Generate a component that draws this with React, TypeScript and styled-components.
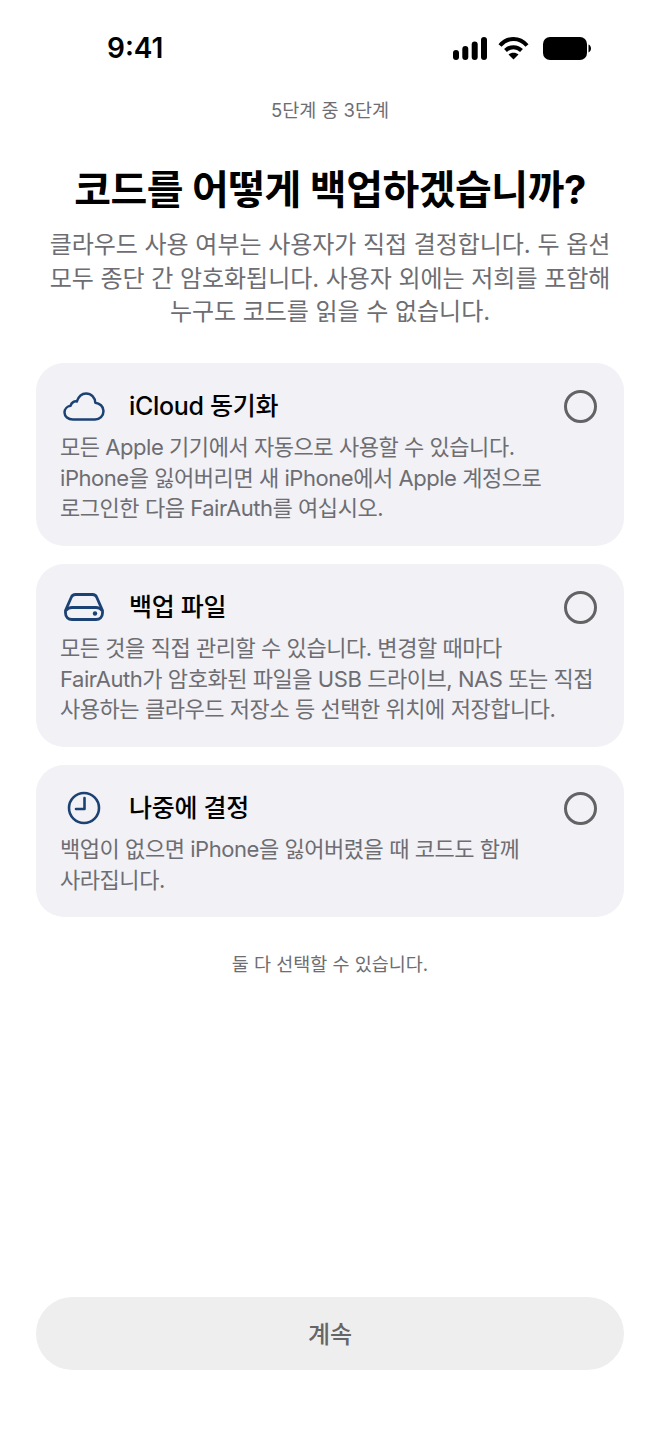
import React from "react";
import styled, { createGlobalStyle } from "styled-components";

const GlobalStyle = createGlobalStyle`
  html, body {
    margin: 0;
    padding: 0;
    background: #ffffff;
  }
  * {
    box-sizing: border-box;
  }
`;

const options = [
  {
    key: "icloud",
    title: "iCloud 동기화",
    lines: [
      "모든 Apple 기기에서 자동으로 사용할 수 있습니다.",
      "iPhone을 잃어버리면 새 iPhone에서 Apple 계정으로",
      "로그인한 다음 FairAuth를 여십시오.",
    ],
  },
  {
    key: "file",
    title: "백업 파일",
    lines: [
      "모든 것을 직접 관리할 수 있습니다. 변경할 때마다",
      "FairAuth가 암호화된 파일을 USB 드라이브, NAS 또는 직접",
      "사용하는 클라우드 저장소 등 선택한 위치에 저장합니다.",
    ],
  },
  {
    key: "later",
    title: "나중에 결정",
    lines: ["백업이 없으면 iPhone을 잃어버렸을 때 코드도 함께", "사라집니다."],
  },
];

const OptionIcon = ({ name }: { name: string }) => {
  if (name === "icloud") {
    return (
      <svg width="42" height="29" viewBox="0 0 42 29" fill="none" stroke="#1c4273" strokeWidth="2.5">
        <path
          d="M10 27.500C5 27.500 1.500 24.300 1.500 20.500c0-3.500 2.700-6.200 6-6.700C8.500 10.500 11.500 8.800 13.800 9.500 15.500 4.700 18.800 1.500 23 1.500c5.400 0 9 4 9.300 9.300 4.200.4 8.200 3.500 8.200 8.200 0 5-3.800 8.500-8.500 8.500z"
          strokeLinejoin="round"
        />
      </svg>
    );
  }
  if (name === "file") {
    return (
      <svg width="40" height="28" viewBox="0 0 40 28" fill="none" stroke="#1c4273" strokeWidth="2.800">
        <path
          d="M11.500 1.500h17c2 0 3.500 1 4.200 2.800L38.500 17.500v2.500c0 3.900-2.600 6.500-6.500 6.500H8c-3.900 0-6.500-2.600-6.500-6.500v-2.500L7.300 4.300C8 2.500 9.500 1.500 11.500 1.500z"
          strokeLinejoin="round"
        />
        <path d="M2 17.500C3.600 15.500 5.500 14.500 8 14.500h24c2.500 0 4.400 1 6 3" />
        <circle cx="31" cy="20.500" r="2.200" fill="#1c4273" stroke="none" />
      </svg>
    );
  }
  return (
    <svg width="34" height="34" viewBox="0 0 34 34" fill="none" stroke="#1c4273" strokeWidth="2.600">
      <circle cx="17" cy="17" r="15" />
      <path d="M17.500 7v11H9" strokeLinecap="round" strokeLinejoin="round" />
    </svg>
  );
};

const App = () => (
  <Screen>
    <GlobalStyle />
    <StatusBar>
      <Clock>9:41</Clock>
      <StatusIcons>
        <svg width="34" height="23" viewBox="0 0 34 23" fill="#000">
          <rect x="0" y="13" width="6" height="10" rx="3" />
          <rect x="9.300" y="9" width="6" height="14" rx="3" />
          <rect x="18.700" y="4.500" width="6" height="18.500" rx="3" />
          <rect x="28" y="0" width="6" height="23" rx="3" />
        </svg>
        <WifiGlyph width="31" height="24" viewBox="0 0 31 24" fill="none" stroke="#000" strokeWidth="4">
          <path d="M2 9.500C9.500 .8 21.500 .8 29 9.500" />
          <path d="M7.500 14.500c4.500-4.500 11.500-4.500 16 0" />
          <path d="M15.500 23.500l-5-5c2.800-2.400 7.200-2.400 10 0z" fill="#000" stroke="none" />
        </WifiGlyph>
        <svg width="48" height="23" viewBox="0 0 48 23" fill="#000">
          <rect x="0" y="0" width="44" height="23" rx="7" />
          <path d="M45.500 7.500c1.500.6 2.500 2.200 2.500 4s-1 3.400-2.500 4z" />
        </svg>
      </StatusIcons>
    </StatusBar>
    <Step>5단계 중 3단계</Step>
    <Title>코드를 어떻게 백업하겠습니까?</Title>
    <Lead>
      클라우드 사용 여부는 사용자가 직접 결정합니다. 두 옵션
      <br />
      모두 종단 간 암호화됩니다. 사용자 외에는 저희를 포함해
      <br />
      누구도 코드를 읽을 수 없습니다.
    </Lead>
    <OptionList>
      {options.map((option) => (
        <OptionCard key={option.key}>
          <OptionHeader>
            <IconSlot>
              <OptionIcon name={option.key} />
            </IconSlot>
            <OptionTitle>{option.title}</OptionTitle>
            <Radio />
          </OptionHeader>
          <OptionBody>
            {option.lines.map((line) => (
              <div key={line}>{line}</div>
            ))}
          </OptionBody>
        </OptionCard>
      ))}
    </OptionList>
    <Note>둘 다 선택할 수 있습니다.</Note>
    <Spacer />
    <ContinueButton>계속</ContinueButton>
  </Screen>
);

const fontStack = `Inter, "Noto Sans CJK KR", sans-serif`;

const Screen = styled.div`
  width: 660px;
  height: 1434px;
  padding: 0 36px 64px;
  display: flex;
  flex-direction: column;
  background: #ffffff;
  font-family: ${fontStack};
  overflow: hidden;
`;

const StatusBar = styled.div`
  height: 96px;
  flex: none;
  display: flex;
  align-items: center;
  justify-content: space-between;
  padding: 0 33px 0 71px;
`;

const Clock = styled.div`
  font-size: 28px;
  font-weight: 600;
  color: #000000;
`;

const StatusIcons = styled.div`
  display: flex;
  align-items: center;
`;

const WifiGlyph = styled.svg`
  margin: 0 14px 0 11px;
`;

const Step = styled.div`
  text-align: center;
  font-size: 18.5px;
  line-height: 28px;
  color: #6d6d72;
`;

const Title = styled.h1`
  margin: 41px 0 0;
  text-align: center;
  font-size: 40px;
  line-height: 50px;
  font-weight: 700;
  letter-spacing: -0.5px;
  color: #000000;
  white-space: nowrap;
`;

const Lead = styled.p`
  margin: 13px 0 0;
  text-align: center;
  font-size: 24px;
  line-height: 33.5px;
  letter-spacing: -0.05px;
  color: #6d6d72;
  white-space: nowrap;
`;

const OptionList = styled.div`
  margin-top: 34.5px;
  display: flex;
  flex-direction: column;
  gap: 18.5px;
`;

const OptionCard = styled.div`
  padding: 24px 27px 22px 24px;
  background: #f1f1f6;
  border-radius: 28px;
`;

const OptionHeader = styled.div`
  display: flex;
  align-items: center;
  height: 38px;
`;

const IconSlot = styled.div`
  width: 48px;
  display: flex;
  justify-content: center;
  margin-right: 21px;
`;

const OptionTitle = styled.div`
  flex: 1;
  font-size: 25px;
  line-height: 36px;
  font-weight: 500;
  letter-spacing: -0.3px;
  color: #000000;
`;

const Radio = styled.div`
  width: 33px;
  height: 33px;
  border-radius: 50%;
  border: 3px solid #636366;
`;

const OptionBody = styled.div`
  margin-top: 7px;
  font-size: 22px;
  line-height: 30.5px;
  letter-spacing: -0.45px;
  color: #6d6d72;
  white-space: nowrap;
`;

const Note = styled.div`
  margin-top: 33px;
  text-align: center;
  font-size: 18.5px;
  line-height: 28px;
  color: #6d6d72;
`;

const Spacer = styled.div`
  flex: 1;
`;

const ContinueButton = styled.button`
  height: 73px;
  flex: none;
  padding: 0 0 3px;
  border: none;
  border-radius: 37px;
  background: #eeeeee;
  color: #666666;
  font-family: ${fontStack};
  font-size: 24px;
  font-weight: 500;
`;

export default App;
